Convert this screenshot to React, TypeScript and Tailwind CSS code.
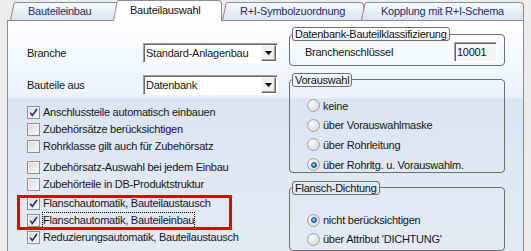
import clsx from 'clsx'

const FONT = "font-['Liberation_Sans',Arial,sans-serif]"

function Ear({ id, h, active }: { id: string; h: number; active: boolean }) {
  return (
    <svg width="5" height={h} className="block shrink-0">
      <defs>
        <linearGradient id={id} x1="0" y1="0" x2="0" y2="1">
          <stop offset="0" stopColor={active ? '#ffffff' : '#f7f9fc'} />
          <stop offset="1" stopColor={active ? '#ffffff' : '#d9e3f0'} />
        </linearGradient>
      </defs>
      <path d={`M0 ${h} L4 2 Q4.5 1 5 1 V${h} Z`} fill={`url(#${id})`} />
      <path d={`M0.5 ${h} L4 2 Q4.5 0.5 5 0.5`} fill="none" stroke="#898c95" strokeWidth="1" />
    </svg>
  )
}

function Tab({
  label,
  idx,
  active = false,
  open = false,
  className,
  textPad,
}: {
  label: string
  idx: number
  active?: boolean
  open?: boolean
  className?: string
  textPad: string
}) {
  const h = active ? 21 : 18
  return (
    <div className={clsx('relative flex shrink-0', active ? 'z-10 -mb-px h-[21px]' : 'h-[18px]', className)}>
      <Ear id={`ear${idx}`} h={h} active={active} />
      <div
        className={clsx(
          'flex-1 flex items-center whitespace-nowrap border-t border-[#898c95]',
          textPad,
          open ? '' : 'border-r rounded-tr-[4px]',
          active ? 'bg-white text-[#111] pb-[2px]' : 'bg-[linear-gradient(180deg,#f7f9fc,#d9e3f0)] text-[#1c2f6e]'
        )}
      >
        {label}
      </div>
    </div>
  )
}

function Combo({ value }: { value: string }) {
  return (
    <div className="w-[135px] h-[20px] flex border border-t-[#a0a0a0] border-l-[#a0a0a0] border-r-white border-b-white bg-white shadow-[inset_1px_1px_0_#696969]">
      <span className="flex-1 pl-[2px] pt-px flex items-center">{value}</span>
      <span className="w-[15px] h-[16px] mt-px mr-px flex items-center justify-center bg-[#f0f0f0] border border-t-[#f8f8f8] border-l-[#f8f8f8] border-r-[#696969] border-b-[#696969] shadow-[inset_-1px_-1px_0_#a0a0a0]">
        <svg width="7" height="4" viewBox="0 0 7 4">
          <path d="M0 0 H7 L3.5 4 Z" fill="#000" />
        </svg>
      </span>
    </div>
  )
}

function Box({ checked }: { checked?: boolean }) {
  return (
    <span className="w-[13px] h-[13px] shrink-0 flex items-center justify-center border border-[#8e8f8f] bg-[linear-gradient(135deg,#d6d6d6,#fbfbfb)] shadow-[inset_0_0_0_1px_#f2f2f2]">
      {checked && (
        <svg width="9" height="9" viewBox="0 0 9 9">
          <path d="M1.2 4.6 L3.3 7.4 L8 1" fill="none" stroke="#21218c" strokeWidth="1.5" />
        </svg>
      )}
    </span>
  )
}

function Check({ label, checked, focus }: { label: string; checked?: boolean; focus?: boolean }) {
  return (
    <div className="h-[17px] flex items-center gap-[3px]">
      <Box checked={checked} />
      <span className={clsx('leading-[15px] h-[15px]', focus && 'outline-1 outline-dotted outline-black')}>{label}</span>
    </div>
  )
}

function Radio({ label, on, className = 'h-[20px]' }: { label: string; on?: boolean; className?: string }) {
  return (
    <div className={clsx('flex items-center gap-[3px]', className)}>
      <span className="w-[13px] h-[13px] shrink-0 rounded-full border border-[#a0a0a0] bg-[radial-gradient(circle_at_35%_35%,#fafafa,#d2d2d2)] flex items-center justify-center">
        {on && (
          <span className="w-[6px] h-[6px] rounded-full border border-[#1b3f7a] bg-[radial-gradient(circle_at_40%_35%,#8fd0ff,#1262c4)]" />
        )}
      </span>
      <span>{label}</span>
    </div>
  )
}

function Group({ title, className, children }: { title: string; className?: string; children: React.ReactNode }) {
  return (
    <fieldset className={clsx('border border-[#6e6e6e] rounded-[4px] px-0 m-0', className)}>
      <legend className="ml-[2px] px-[2px] h-[14px] leading-[12px] border border-[#6e6e6e] rounded-[3px] text-[#111]">
        {title}
      </legend>
      {children}
    </fieldset>
  )
}

export default function App() {
  return (
    <div className={clsx('w-[531px] h-[251px] overflow-hidden bg-[#ececec] text-[11px] tracking-[-0.25px] text-[#161616] relative', FONT)}>
      {/* tab strip */}
      <div className="relative z-10 h-[20px] flex items-end pl-[10px]">
        <Tab idx={1} label="Bauteileinbau" open textPad="pl-[13px]" className="w-[106px]" />
        <Tab idx={2} label="Bauteilauswahl" active textPad="pl-[12px]" className="-ml-[3px] w-[109px]" />
        <Tab idx={3} label="R+I-Symbolzuordnung" textPad="pl-[13px]" className="w-[142px]" />
        <Tab idx={4} label="Kopplung mit R+I-Schema" textPad="pl-[15px]" className="-ml-[3px] w-[163px]" />
      </div>

      {/* page */}
      <div className="ml-[7px] w-[517px] h-[232px] border border-[#898c95] flex bg-[linear-gradient(180deg,#fdfeff_0px,#edf2f9_76px,#dbe5f2_78px,#e3eaf4_231px)]">
        <div className="w-[281px] shrink-0 flex flex-col">
          <div className="mt-[22px] h-[20px] flex items-center">
            <span className="w-[135px] pl-[19px]">Branche</span>
            <Combo value="Standard-Anlagenbau" />
          </div>
          <div className="mt-[12px] h-[20px] flex items-center">
            <span className="w-[135px] pl-[19px]">Bauteile aus</span>
            <Combo value="Datenbank" />
          </div>
          <div className="mt-[9px] pl-[19px] flex flex-col">
            <Check label="Anschlussteile automatisch einbauen" checked />
            <Check label="Zubehörsätze berücksichtigen" />
            <Check label="Rohrklasse gilt auch für Zubehörsatz" />
            <div className="h-[4px]" />
            <Check label="Zubehörsatz-Auswahl bei jedem Einbau" />
            <Check label="Zubehörteile in DB-Produktstruktur" />
            <div className="h-[2px]" />
            <Check label="Flanschautomatik, Bauteilaustausch" checked />
            <Check label="Flanschautomatik, Bauteileinbau" checked focus />
            <Check label="Reduzierungsautomatik, Bauteilaustausch" checked />
          </div>
        </div>

        <div className="w-[216px] shrink-0 flex flex-col pt-[6px]">
          <Group title="Datenbank-Bauteilklassifizierung" className="h-[44px]">
            <div className="mt-px h-[20px] flex items-center pl-[15px]">
              <span className="flex-1">Branchenschlüssel</span>
              <span className="w-[43px] h-[20px] mr-[7px] flex items-center pl-[2px] bg-[#f4f4f4] border border-t-[#a0a0a0] border-l-[#a0a0a0] border-r-white border-b-white shadow-[inset_1px_1px_0_#696969]">
                10001
              </span>
            </div>
          </Group>

          <Group title="Vorauswahl" className="mt-[7px] h-[100px]">
            <div className="mt-[9px] pl-[17px] flex flex-col">
              <Radio label="keine" />
              <Radio label="über Vorauswahlmaske" className="h-[19px]" />
              <Radio label="über Rohrleitung" />
              <Radio label="über Rohrltg. u. Vorauswahlm." on />
            </div>
          </Group>

          <Group title="Flansch-Dichtung" className="mt-[8px] h-[80px]">
            <div className="mt-[16px] pl-[17px] flex flex-col">
              <Radio label="nicht berücksichtigen" on className="h-[19px]" />
              <Radio label="über Attribut 'DICHTUNG'" className="h-[19px]" />
            </div>
          </Group>
        </div>
      </div>

      {/* highlight marker over the two flange options */}
      <div className="absolute left-[17px] top-[195px] w-[215px] h-[35px] border-[3px] border-[#ee0000]" />
    </div>
  )
}
